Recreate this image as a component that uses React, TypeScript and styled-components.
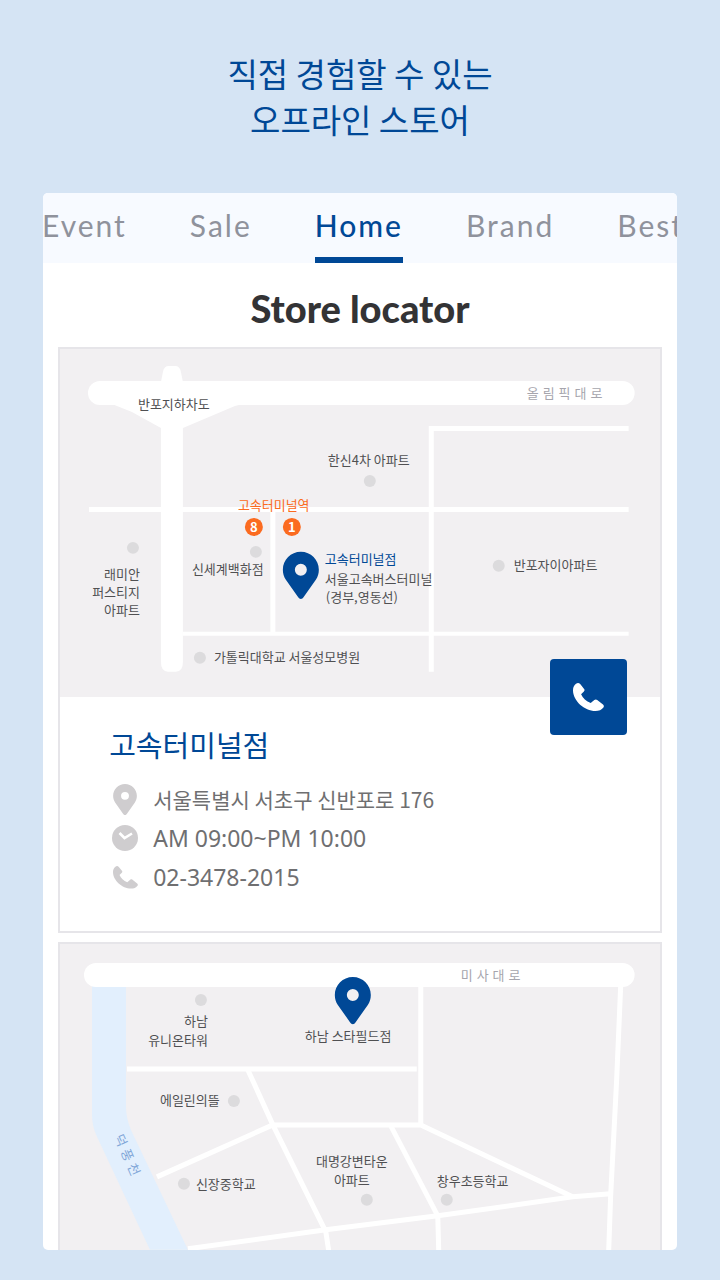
import React from 'react';
import styled, { createGlobalStyle } from 'styled-components';

const color = {
  sky: '#d5e4f4',
  navy: '#004896',
  tabBar: '#f7faff',
  tab: '#8f929c',
  ink: '#333335',
  text: '#6f6f71',
  label: '#505052',
  muted: '#a6a5ad',
  border: '#e6e5e9',
  land: '#f2f0f2',
  dot: '#dcdbdd',
  icon: '#cfcdcf',
  orange: '#fb6b20',
  river: '#e2effd',
};

const korean = "'Noto Sans CJK KR', sans-serif";
const latin = "Lato, 'Noto Sans CJK KR', sans-serif";

const GlobalStyle = createGlobalStyle`
  *, *::before, *::after { box-sizing: border-box; }
  body { margin: 0; background: ${color.sky}; font-family: ${korean}; }
`;

const Page = styled.main`
  padding: 50px 6% 30px;
`;

const Headline = styled.h1`
  margin: 0 0 51px;
  color: ${color.navy};
  font-size: 33px;
  font-weight: 400;
  line-height: 46px;
  text-align: center;
`;

const Screen = styled.section`
  overflow: hidden;
  border-radius: 5px;
  background: #fff;
`;

const TabBar = styled.nav`
  display: flex;
  justify-content: center;
  gap: 63px;
  height: 70px;
  padding-left: 6px;
  overflow: hidden;
  background: ${color.tabBar};
`;

const Tab = styled.a<{ $active?: boolean }>`
  flex: none;
  border-bottom: 6px solid ${({ $active }) => ($active ? color.navy : 'transparent')};
  color: ${({ $active }) => ($active ? color.navy : color.tab)};
  font-family: ${latin};
  font-size: 30px;
  font-weight: ${({ $active }) => ($active ? 500 : 400)};
  letter-spacing: 2px;
  line-height: 64px;
  text-decoration: none;
`;

const SectionTitle = styled.h2`
  margin: 0;
  padding: 20px 0 14px;
  color: ${color.ink};
  font-family: ${latin};
  font-size: 38px;
  font-weight: 900;
  line-height: 50px;
  text-align: center;
`;

const StoreList = styled.div`
  display: flex;
  flex-direction: column;
  gap: 9px;
  padding: 0 15px;
`;

const StoreCard = styled.article<{ $continues?: boolean }>`
  border: 2px solid ${color.border};
  border-bottom-width: ${({ $continues }) => ($continues ? 0 : '2px')};
`;

const MapArea = styled.div`
  position: relative;
`;

const MapDrawing = styled.svg`
  display: block;
  width: 100%;
  height: auto;
  background: ${color.land};
  font-family: ${korean};
  font-size: 13px;
`;

const CallButton = styled.button`
  position: absolute;
  right: 33px;
  bottom: -38px;
  display: flex;
  align-items: center;
  justify-content: center;
  width: 77px;
  height: 76px;
  padding: 0;
  border: 0;
  border-radius: 4px;
  background: ${color.navy};
  color: #fff;
  cursor: pointer;
`;

const StoreInfo = styled.div`
  padding: 27px 49px 34px;
`;

const StoreName = styled.h3`
  margin: 0 0 16px;
  color: ${color.navy};
  font-size: 29px;
  font-weight: 400;
  line-height: 40px;
`;

const Detail = styled.p<{ $latin?: boolean }>`
  display: flex;
  align-items: center;
  gap: 12px;
  margin: 0;
  color: ${color.text};
  font-family: ${({ $latin }) => ($latin ? "'Noto Sans', sans-serif" : korean)};
  font-size: ${({ $latin }) => ($latin ? '23px' : '21px')};
  line-height: 39px;
`;

const IconSlot = styled.span`
  display: flex;
  flex: none;
  justify-content: center;
  width: 32px;
  color: ${color.icon};
`;

const PIN =
  'M18 0C8 0 0 8 0 18c0 4 1 7 3 10l12 17c2 3 4 3 6 0l12-17c2-3 3-6 3-10C36 8 28 0 18 0zm0 12a6 6 0 1 1 0 12 6 6 0 0 1 0-12z';

const PinIcon = () => (
  <svg width="24" height="31" viewBox="0 0 36 47" aria-hidden="true">
    <path d={PIN} fill="currentColor" fillRule="evenodd" />
  </svg>
);

const ClockIcon = () => (
  <svg width="26" height="26" viewBox="0 0 26 26" aria-hidden="true">
    <circle cx="13" cy="13" r="13" fill="currentColor" />
    <path d="M7.500 8l5 5 7.500-4.500" fill="none" stroke="#fff" strokeWidth="2.600" />
  </svg>
);

const PhoneIcon = ({ width = 25 }: { width?: number }) => (
  <svg width={width} height={(width * 28) / 31} viewBox="0 0 31 28" aria-hidden="true">
    <path
      d="M3 .8C4.500-.2 6-.1 7.200 1.100l3.900 4.800c.7.9.5 1.700-.2 2.500L8.100 11.200c1.600 3.900 5.200 7.300 9.600 8.800l3.600-3c.9-.8 2-.8 2.900-.1l5.800 4.700c1 .9 1.100 1.900.4 2.900-1.800 2.500-4.500 3.500-8 3.500C11.400 28-.1 17.700 0 7.200.1 4.300 1 2.200 3 .8z"
      fill="currentColor"
    />
  </svg>
);

type Point = [number, number];

const Dots = ({ at }: { at: Point[] }) => (
  <g fill={color.dot}>
    {at.map(([x, y]) => (
      <circle key={`${x}-${y}`} cx={x} cy={y} r="6" />
    ))}
  </g>
);

const Marker = ({ x, y }: { x: number; y: number }) => (
  <path d={PIN} transform={`translate(${x} ${y})`} fill={color.navy} fillRule="evenodd" />
);

const ExitBadge = ({ x, children }: { x: number; children: string }) => (
  <g>
    <circle cx={x} cy="527" r="9" fill={color.orange} />
    <text x={x} y="532" fill="#fff" fontWeight="700" textAnchor="middle">
      {children}
    </text>
  </g>
);

const TerminalMap = () => (
  <MapDrawing viewBox="60 349 600 348" role="img" aria-label="고속터미널점 약도">
    <g fill="#fff">
      <rect x="88" y="381" width="547" height="24" rx="12" />
      <path d="M112 404l20 8 29 16h22l52-22 8-2z" />
      <path d="M161 382l2-10q1-6 6-6h6q5 0 6 6l2 10v280q0 10-7 10h-8q-7 0-7-10z" />
    </g>
    <g fill="none" stroke="#fff" strokeWidth="5">
      <path d="M89 509.500H629" />
      <path d="M629 428.500H431.500V672" />
      <path d="M273 510V634" />
      <path d="M183 634H629" strokeWidth="4" />
    </g>
    <Dots at={[[370, 481], [133, 548], [256, 552], [200, 658], [499, 566]]} />
    <g fill={color.label}>
      <text x="138" y="409">반포지하차도</text>
      <text x="328" y="465">한신4차 아파트</text>
      <text x="192" y="574">신세계백화점</text>
      <text x="514" y="570">반포자이아파트</text>
      <text x="214" y="662">가톨릭대학교 서울성모병원</text>
      <text x="325" y="584">서울고속버스터미널</text>
      <text x="326" y="602">(경부,영동선)</text>
      <g textAnchor="end">
        <text x="140" y="579">래미안</text>
        <text x="140" y="597">퍼스티지</text>
        <text x="140" y="615">아파트</text>
      </g>
    </g>
    <text x="527" y="398" fill={color.muted} letterSpacing="4">올림픽대로</text>
    <text x="238" y="510" fill={color.orange}>고속터미널역</text>
    <ExitBadge x={254}>8</ExitBadge>
    <ExitBadge x={292}>1</ExitBadge>
    <Marker x={283} y={552} />
    <text x="325" y="564" fill={color.navy}>고속터미널점</text>
  </MapDrawing>
);

const HanamMap = () => (
  <MapDrawing viewBox="60 944 600 306" role="img" aria-label="하남 스타필드점 약도">
    <path d="M92 986h34v120q0 12 5 24l57 120h-38L97 1137q-5-11-5-22z" fill={color.river} />
    <rect x="84" y="963" width="551" height="24" rx="12" fill="#fff" />
    <g fill="none" stroke="#fff" strokeWidth="5">
      <path d="M127 1069H417" />
      <path d="M421 987V1125" />
      <path d="M273 1125H421L573 1197" />
      <path d="M248 1070l25 55 53 107 3 20" />
      <path d="M157 1177l116-52" />
      <path d="M188 1249l138-19 112-14 135-19 38-3" />
      <path d="M621 987l-4 93-6 116-2 56" />
      <path d="M391 1126l47 90 1 36" />
    </g>
    <Dots at={[[201, 1000], [234, 1101], [184, 1184], [367, 1200], [447, 1200]]} />
    <g fill={color.label}>
      <g textAnchor="end">
        <text x="208" y="1026">하남</text>
        <text x="208" y="1045">유니온타워</text>
      </g>
      <text x="160" y="1105">에일린의뜰</text>
      <text x="196" y="1189">신장중학교</text>
      <text x="305" y="1041">하남 스타필드점</text>
      <text x="437" y="1186">창우초등학교</text>
      <g textAnchor="middle">
        <text x="352" y="1166">대명강변타운</text>
        <text x="352" y="1185">아파트</text>
      </g>
    </g>
    <text x="461" y="980" fill={color.muted} letterSpacing="4">미사대로</text>
    <text transform="translate(114 1137) rotate(66)" fill="#7fa6d8" letterSpacing="4">덕풍천</text>
    <Marker x={335} y={977} />
  </MapDrawing>
);

const tabs = ['Event', 'Sale', 'Home', 'Brand', 'Best'];

export default function App() {
  return (
    <>
      <GlobalStyle />
      <Page>
        <Headline>
          직접 경험할 수 있는
          <br />
          오프라인 스토어
        </Headline>
        <Screen>
          <TabBar>
            {tabs.map((name) => (
              <Tab key={name} href={`#${name.toLowerCase()}`} $active={name === 'Home'}>
                {name}
              </Tab>
            ))}
          </TabBar>
          <SectionTitle>Store locator</SectionTitle>
          <StoreList>
            <StoreCard>
              <MapArea>
                <TerminalMap />
                <CallButton type="button" aria-label="전화 걸기">
                  <PhoneIcon width={31} />
                </CallButton>
              </MapArea>
              <StoreInfo>
                <StoreName>고속터미널점</StoreName>
                <Detail>
                  <IconSlot><PinIcon /></IconSlot>
                  서울특별시 서초구 신반포로 176
                </Detail>
                <Detail $latin>
                  <IconSlot><ClockIcon /></IconSlot>
                  AM 09:00~PM 10:00
                </Detail>
                <Detail $latin>
                  <IconSlot><PhoneIcon /></IconSlot>
                  02-3478-2015
                </Detail>
              </StoreInfo>
            </StoreCard>
            <StoreCard $continues>
              <MapArea>
                <HanamMap />
              </MapArea>
            </StoreCard>
          </StoreList>
        </Screen>
      </Page>
    </>
  );
}
